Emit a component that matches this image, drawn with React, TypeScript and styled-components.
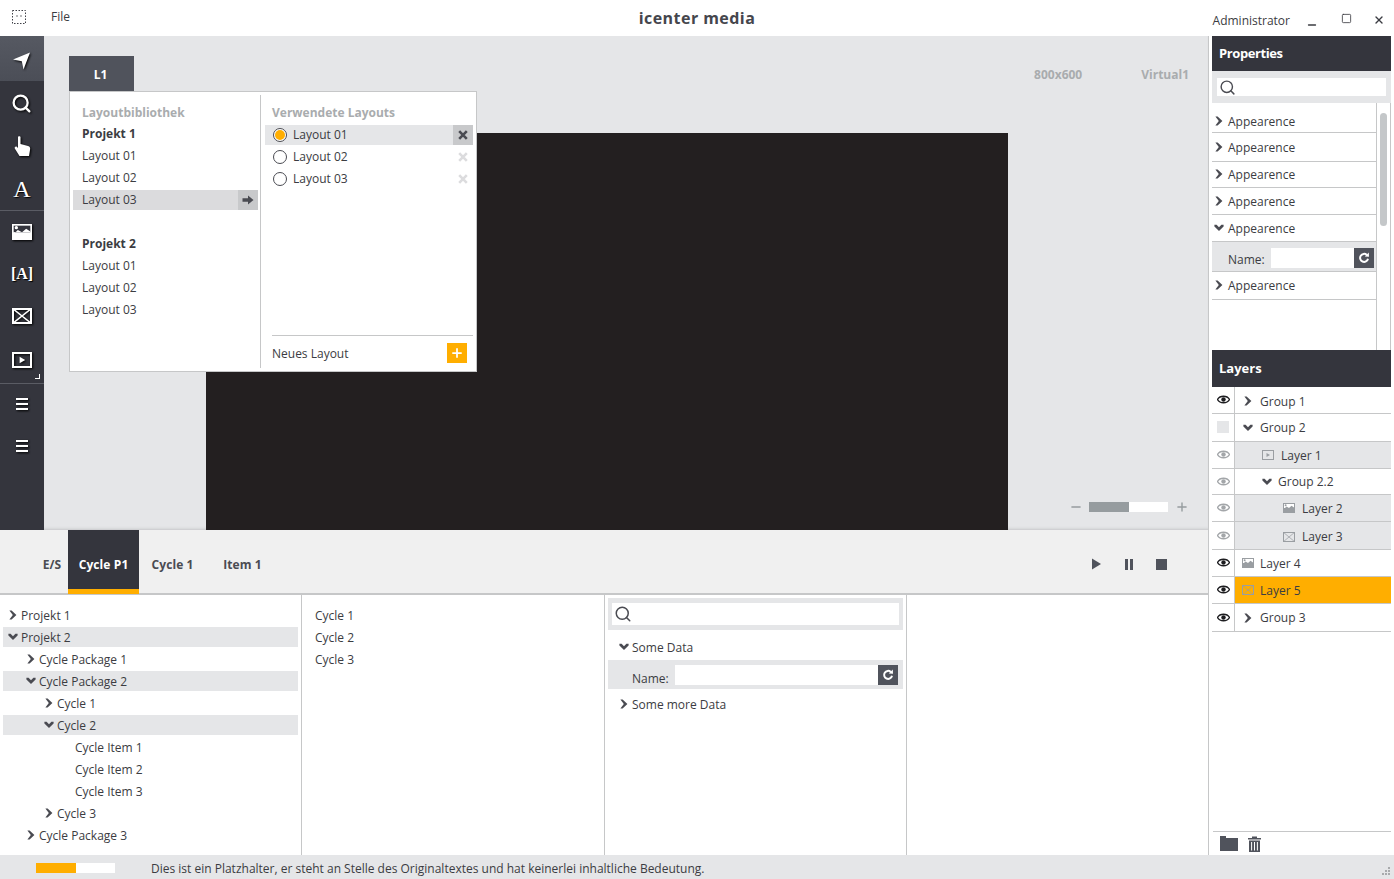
import React from 'react';
import styled, { createGlobalStyle } from 'styled-components';
import { Minus, Square, X, Plus, Search } from 'lucide-react';

const DARK = '#34353d';
const SLATE = '#50535c';
const PALE = '#e5e6e8';
const LINE = '#c6c7c8';
const ORANGE = '#ffae00';
const TEXT = '#3b3c42';

const GlobalStyle = createGlobalStyle`
  html, body { margin: 0; padding: 0; background: #fff; }
  body { font-family: "Open Sans", "Noto Sans", sans-serif; font-size: 12px; color: ${TEXT}; }
  * { box-sizing: border-box; }
`;

const Shell = styled.div`
  width: 1394px;
  height: 879px;
  display: grid;
  grid-template-rows: 36px 1fr 24px;
  overflow: hidden;
`;

/* title bar */
const TitleBar = styled.header`
  display: grid;
  grid-template-columns: 1fr auto 1fr;
  align-items: center;
  background: #fff;
`;
const TitleLeft = styled.div`
  display: flex;
  align-items: center;
  padding: 0 0 3px 12px;
  gap: 25px;
`;
const AppTitle = styled.div`
  font-size: 16px;
  font-weight: 700;
  letter-spacing: 0.45px;
  color: #45464d;
`;
const TitleRight = styled.div`
  display: flex;
  align-items: center;
  justify-content: flex-end;
  padding: 4px 5px 0 0;
  color: #3b3c42;
`;
const UserName = styled.span`
  margin-right: 12px;
`;
const WinButton = styled.span<{ $gap: number; $y: number }>`
  width: 20px;
  margin-left: ${(p) => p.$gap}px;
  display: flex;
  justify-content: center;
  transform: translateY(${(p) => p.$y}px);
`;

/* body */
const Body = styled.div`
  display: grid;
  grid-template-columns: 1209px 1fr;
  min-height: 0;
`;
const Work = styled.div`
  display: grid;
  grid-template-rows: 494px 1fr;
  min-height: 0;
  border-right: 1px solid ${LINE};
`;
const Top = styled.div`
  display: grid;
  grid-template-columns: 44px 1fr;
  min-height: 0;
`;

/* tools */
const Tools = styled.nav`
  background: ${DARK};
  display: flex;
  flex-direction: column;
  position: relative;
`;
const Tool = styled.div<{ $active?: boolean; $h: number; $line?: boolean; $size?: number; $weight?: number; $pt?: number; $pr?: number }>`
  height: ${(p) => p.$h}px;
  flex: none;
  display: flex;
  align-items: center;
  justify-content: center;
  padding: ${(p) => p.$pt ?? 0}px ${(p) => p.$pr ?? 0}px 0 0;
  color: #fff;
  background: ${(p) => (p.$active ? 'linear-gradient(#565962, #4b4e57)' : 'transparent')};
  border-bottom: ${(p) => (p.$line ? '1px solid #5a5c64' : '0')};
  font-family: "Liberation Serif", serif;
  font-weight: ${(p) => p.$weight ?? 700};
  font-size: ${(p) => p.$size ?? 20}px;
  text-shadow: 1px 1px 1px #000;
  & svg { filter: drop-shadow(1px 1px 1px #000); }
`;
const ToolCorner = styled.span`
  position: absolute;
  left: 35px;
  top: 338px;
  width: 5px;
  height: 5px;
  border-right: 1px solid #fff;
  border-bottom: 1px solid #fff;
`;

/* canvas */
const Canvas = styled.main`
  position: relative;
  background: ${PALE};
  display: flex;
  flex-direction: column;
  box-shadow: inset 0 -3px 3px -2px #c4c5c7;
`;
const CanvasHead = styled.div`
  height: 97px;
  flex: none;
  display: flex;
  justify-content: flex-end;
  gap: 59px;
  padding: 30px 19px 0 0;
  font-weight: 700;
  color: #a9acae;
`;
const Stage = styled.div`
  flex: 1;
  display: flex;
  padding-left: 162px;
  min-height: 0;
`;
const Screen = styled.div`
  width: 802px;
  background: #231f20;
`;
const Zoom = styled.div`
  flex: 1;
  display: flex;
  align-items: center;
  align-self: flex-end;
  padding: 0 0 16px 61px;
  color: #969c9f;
`;
const ZoomTrack = styled.div`
  width: 79px;
  height: 10px;
  margin: 0 7px 0 6px;
  background: #fff;
`;
const ZoomFill = styled.div`
  height: 100%;
  background: #969c9f;
`;

/* layout picker */
const LayoutTab = styled.div`
  position: absolute;
  left: 25px;
  top: 20px;
  width: 65px;
  height: 35px;
  background: ${SLATE};
  color: #fff;
  font-weight: 700;
  display: flex;
  align-items: center;
  justify-content: center;
  padding: 2px 2px 0 0;
`;
const Popup = styled.div`
  position: absolute;
  left: 25px;
  top: 55px;
  width: 408px;
  height: 281px;
  background: #fff;
  border: 1px solid ${LINE};
  display: grid;
  grid-template-columns: 191px 1fr;
  padding: 3px 0;
`;
const PopLeft = styled.div`
  border-right: 1px solid ${LINE};
  padding: 7px 2px 0 3px;
`;
const PopRight = styled.div`
  padding: 7px 3px 0 4px;
  display: flex;
  flex-direction: column;
`;
const PopHead = styled.div<{ $left: number; $mb: number }>`
  height: 21px;
  line-height: 21px;
  margin-bottom: ${(p) => p.$mb}px;
  padding-left: ${(p) => p.$left}px;
  font-weight: 700;
  color: #a9acae;
`;
const PopGroup = styled.div<{ $mb: number }>`
  height: 22px;
  margin-bottom: ${(p) => p.$mb}px;
  line-height: 22px;
  padding-left: 9px;
  font-weight: 700;
  color: ${TEXT};
`;
const PopRow = styled.div<{ $on?: boolean }>`
  height: 20px;
  margin-bottom: 2px;
  padding: 0 0 2px 9px;
  display: flex;
  align-items: center;
  justify-content: space-between;
  background: ${(p) => (p.$on ? '#dbdbdd' : 'transparent')};
`;
const PopGap = styled.div`
  height: 21px;
`;
const PopButton = styled.span<{ $on?: boolean; $mb?: number }>`
  width: 20px;
  height: 20px;
  margin-bottom: ${(p) => p.$mb ?? 0}px;
  display: flex;
  align-items: center;
  justify-content: center;
  background: ${(p) => (p.$on ? '#c8c9cb' : 'transparent')};
`;
const UsedRow = styled.div<{ $on?: boolean }>`
  height: 20px;
  margin-bottom: 2px;
  display: flex;
  align-items: center;
  padding-left: 8px;
  gap: 6px;
  background: ${(p) => (p.$on ? PALE : 'transparent')};
`;
const Radio = styled.span<{ $on?: boolean }>`
  width: 14px;
  height: 14px;
  flex: none;
  border-radius: 50%;
  border: 1px solid #4a4b52;
  background: #fff;
  display: flex;
  align-items: center;
  justify-content: center;
  &::after {
    content: '';
    width: 10px;
    height: 10px;
    border-radius: 50%;
    background: ${(p) => (p.$on ? ORANGE : 'transparent')};
  }
`;
const UsedName = styled.span`
  flex: 1;
  padding-bottom: 1px;
`;
const PopFoot = styled.div`
  margin: auto 0 0 7px;
  height: 33px;
  border-top: 1px solid ${LINE};
  display: flex;
  align-items: center;
  justify-content: space-between;
  padding: 2px 6px 0 0;
`;
const AddButton = styled.span`
  width: 20px;
  height: 20px;
  background: ${ORANGE};
  color: #fff;
  display: flex;
  align-items: center;
  justify-content: center;
`;

/* cycle area */
const Bottom = styled.section`
  display: grid;
  grid-template-rows: 65px 1fr;
  min-height: 0;
`;
const TabBar = styled.div`
  background: #f0f0f0;
  border-bottom: 2px solid ${LINE};
  display: flex;
  padding-left: 36px;
`;
const Tab = styled.div<{ $active?: boolean; $w: number }>`
  width: ${(p) => p.$w}px;
  height: 64px;
  display: flex;
  align-items: center;
  justify-content: center;
  padding-top: 9px;
  font-weight: 700;
  letter-spacing: 0.1px;
  color: ${(p) => (p.$active ? '#fff' : '#4a4b52')};
  background: ${(p) => (p.$active ? DARK : 'transparent')};
  border-bottom: ${(p) => (p.$active ? `5px solid ${ORANGE}` : '0')};
  padding-bottom: ${(p) => (p.$active ? '0' : '5px')};
`;
const Player = styled.div`
  margin-left: auto;
  display: flex;
  align-items: center;
  gap: 21px;
  padding: 5px 41px 0 0;
  color: ${SLATE};
`;
const Columns = styled.div`
  display: grid;
  grid-template-columns: 302px 303px 302px 1fr;
  min-height: 0;
`;
const Column = styled.div<{ $pt?: number }>`
  border-right: 1px solid ${LINE};
  padding: ${(p) => p.$pt ?? 10}px 3px 0 3px;
  min-width: 0;
  &:last-child { border-right: 0; }
`;
const TreeRow = styled.div<{ $indent: number; $on?: boolean }>`
  height: 20px;
  margin-bottom: 2px;
  display: flex;
  align-items: center;
  gap: 3px;
  padding-left: ${(p) => p.$indent}px;
  background: ${(p) => (p.$on ? PALE : 'transparent')};
  white-space: nowrap;
`;
const LeafGap = styled.span`
  width: 8px;
`;
const PlainRow = styled.div`
  height: 20px;
  margin-bottom: 2px;
  padding-left: 10px;
  display: flex;
  align-items: center;
`;
const SearchBand = styled.div<{ $x: number; $y: number }>`
  background: ${PALE};
  padding: ${(p) => p.$y}px ${(p) => p.$x}px;
  height: 32px;
  flex: none;
`;
const SearchBox = styled.div`
  height: 100%;
  background: #fff;
  padding-left: 2px;
  display: flex;
  align-items: center;
  color: #4a4b52;
`;
const DataHead = styled.div<{ $h: number; $pt?: number }>`
  height: ${(p) => p.$h}px;
  display: flex;
  align-items: center;
  gap: 3px;
  padding: ${(p) => p.$pt ?? 0}px 0 0 11px;
`;
const NameBand = styled.div<{ $left: number; $right: number; $pt: number }>`
  background: ${PALE};
  height: 100%;
  display: flex;
  align-items: center;
  padding: ${(p) => p.$pt}px ${(p) => p.$right}px 0 ${(p) => p.$left}px;
`;
const NameSlot = styled.div`
  height: 29px;
`;
const NameLabel = styled.span<{ $w: number; $pt: number }>`
  width: ${(p) => p.$w}px;
  flex: none;
  padding-top: ${(p) => p.$pt}px;
`;
const NameInput = styled.div`
  flex: 1;
  height: 20px;
  background: #fff;
`;
const RefreshButton = styled.span`
  width: 20px;
  height: 20px;
  background: ${SLATE};
  display: flex;
  align-items: center;
  justify-content: center;
  color: #fff;
`;

/* right panel */
const Side = styled.aside`
  display: flex;
  flex-direction: column;
  padding: 0 3px 0 3px;
  min-height: 0;
`;
const PanelHead = styled.div<{ $h: number; $spacing?: number }>`
  height: ${(p) => p.$h}px;
  flex: none;
  background: ${DARK};
  color: #fff;
  font-weight: 700;
  font-size: 13px;
  letter-spacing: ${(p) => p.$spacing ?? 0}px;
  display: flex;
  align-items: center;
  padding: 0 0 2px 7px;
`;
const PropArea = styled.div`
  height: 247px;
  flex: none;
  display: grid;
  grid-template-columns: 165px 14px;
`;
const PropList = styled.div`
  border-right: 1px solid ${LINE};
`;
const PropRow = styled.div<{ $h: number; $bottom: number }>`
  height: ${(p) => p.$h}px;
  border-bottom: 1px solid ${LINE};
  display: flex;
  align-items: flex-end;
  padding: 0 0 ${(p) => p.$bottom}px 2px;
`;
const PropLabel = styled.div`
  display: flex;
  align-items: center;
  gap: 4px;
  height: 18px;
`;
const NameRow = styled.div`
  height: 30px;
  border-bottom: 1px solid ${LINE};
`;
const ScrollTrack = styled.div`
  padding: 10px 3px 0 3px;
  border-right: 1px solid ${LINE};
`;
const ScrollThumb = styled.div`
  height: 113px;
  border-radius: 4px;
  background: #c4c7c9;
`;
const LayerList = styled.div`
  flex: 1;
  min-height: 0;
`;
const LayerRow = styled.div<{ $h: number; $shade?: boolean }>`
  height: ${(p) => p.$h}px;
  display: grid;
  grid-template-columns: 23px 1fr;
  border-bottom: 1px solid ${LINE};
  background: ${(p) => (p.$shade ? PALE : '#fff')};
`;
const EyeCell = styled.div<{ $off?: boolean }>`
  background: #fff;
  border-right: 1px solid ${LINE};
  display: flex;
  align-items: center;
  justify-content: center;
  padding-bottom: 1px;
  color: ${(p) => (p.$off ? '#a3a6a9' : '#1d1d20')};
`;
const EmptyVisible = styled.span`
  width: 12px;
  height: 12px;
  background: ${PALE};
`;
const LayerBody = styled.div<{ $indent: number; $sel?: boolean; $gap: number; $pt: number }>`
  display: flex;
  align-items: center;
  gap: ${(p) => p.$gap}px;
  padding: ${(p) => p.$pt}px 0 0 ${(p) => p.$indent}px;
  background: ${(p) => (p.$sel ? ORANGE : 'transparent')};
`;
const SideFoot = styled.div`
  height: 24px;
  flex: none;
  margin-left: 1px;
  border-top: 1px solid ${LINE};
  display: flex;
  align-items: center;
  gap: 10px;
  padding-left: 7px;
  color: ${SLATE};
`;

/* status */
const StatusBar = styled.footer`
  background: ${PALE};
  display: flex;
  align-items: center;
  padding: 2px 0 0 36px;
  position: relative;
`;
const Progress = styled.div`
  width: 79px;
  height: 10px;
  background: #fff;
  margin-right: 36px;
`;
const ProgressFill = styled.div`
  height: 100%;
  background: ${ORANGE};
`;
const Grip = styled.svg`
  position: absolute;
  right: 3px;
  bottom: 3px;
`;
const Glyph = styled.svg`
  flex: none;
`;

const ChevronRight = () => (
  <Glyph width="10" height="10" viewBox="0 0 10 10">
    <path d="M1.4 0.6 H3.6 L8.4 5 L3.6 9.4 H1.4 L4.8 5Z" fill="#4a4b52" />
  </Glyph>
);
const ChevronDown = () => (
  <Glyph width="10" height="10" viewBox="0 0 10 10">
    <path d="M0.4 1.8 H2.6 L5 4.2 L7.4 1.8 H9.6 V3.6 L5 8 L0.4 3.6Z" fill="#4a4b52" />
  </Glyph>
);

const Eye = () => (
  <svg width="13" height="9" viewBox="0 0 13 9">
    <path d="M0.5 4.5 C3 0.2 10 0.2 12.5 4.5 C10 8.8 3 8.8 0.5 4.5Z" fill="none" stroke="currentColor" strokeWidth="1.4" />
    <circle cx="6.5" cy="4.5" r="2.2" fill="currentColor" />
  </svg>
);
const Refresh = () => (
  <svg width="12" height="12" viewBox="0 0 12 12">
    <path d="M8.8 2.9 A4 4 0 1 0 10 6.8" fill="none" stroke="#fff" strokeWidth="2" />
    <path d="M6.8 4.6 L11 4.8 L10.8 0.4Z" fill="#fff" />
  </svg>
);
const Cross = ({ color }: { color: string }) => (
  <svg width="10" height="10" viewBox="0 0 10 10">
    <path d="M1.2 1.2 L8.8 8.8 M8.8 1.2 L1.2 8.8" stroke={color} strokeWidth="2.6" />
  </svg>
);
const ArrowRight = () => (
  <svg width="12" height="10" viewBox="0 0 12 10">
    <path d="M0.5 3.2 H6 V0.5 L11.5 5 L6 9.5 V6.8 H0.5Z" fill="#4a4b52" />
  </svg>
);
const ImageGlyph = ({ size = 12, color = '#9a9ea2', hole = '#fff' }: { size?: number; color?: string; hole?: string }) => (
  <Glyph width={size} height={(size * 10) / 12} viewBox="0 0 12 10">
    <rect x="0" y="0" width="12" height="10" fill={color} />
    <rect x="1" y="1" width="10" height="4" fill={hole} />
    <path d="M1 6 L3.5 3.6 L6 5 L8.5 2.8 L11 4.5 V5 H1Z" fill={color} />
    <circle cx="2.6" cy="2.2" r="1" fill={color} />
  </Glyph>
);
const CrossBox = ({ color = '#9a9ea2', w = 12, h = 10, sw = 1 }: { color?: string; w?: number; h?: number; sw?: number }) => (
  <Glyph width={w} height={h} viewBox={`0 0 ${w} ${h}`}>
    <rect x={sw / 2} y={sw / 2} width={w - sw} height={h - sw} fill="none" stroke={color} strokeWidth={sw} />
    <path d={`M0 0 L${w} ${h} M${w} 0 L0 ${h}`} stroke={color} strokeWidth={sw * 0.7} />
  </Glyph>
);
const PlayBox = ({ color = '#9a9ea2', w = 12, h = 10, sw = 1 }: { color?: string; w?: number; h?: number; sw?: number }) => (
  <Glyph width={w} height={h} viewBox={`0 0 ${w} ${h}`}>
    <rect x={sw / 2} y={sw / 2} width={w - sw} height={h - sw} fill="none" stroke={color} strokeWidth={sw} />
    <path d={`M${w / 2 - h * 0.15} ${h * 0.3} L${w / 2 + h * 0.2} ${h / 2} L${w / 2 - h * 0.15} ${h * 0.7}Z`} fill={color} />
  </Glyph>
);
const Lines = () => (
  <svg width="12" height="12" viewBox="0 0 12 12">
    <path d="M0 1 H12 M0 6 H12 M0 11 H12" stroke="#fff" strokeWidth="2" />
  </svg>
);

const tree = [
  { label: 'Projekt 1', indent: 5, open: false },
  { label: 'Projekt 2', indent: 5, open: true, on: true },
  { label: 'Cycle Package 1', indent: 23, open: false },
  { label: 'Cycle Package 2', indent: 23, open: true, on: true },
  { label: 'Cycle 1', indent: 41, open: false },
  { label: 'Cycle 2', indent: 41, open: true, on: true },
  { label: 'Cycle Item 1', indent: 61, leaf: true },
  { label: 'Cycle Item 2', indent: 61, leaf: true },
  { label: 'Cycle Item 3', indent: 61, leaf: true },
  { label: 'Cycle 3', indent: 41, open: false },
  { label: 'Cycle Package 3', indent: 23, open: false },
];

const props = [
  { h: 30, bottom: 2, open: false },
  { h: 29, bottom: 5, open: false },
  { h: 26, bottom: 4, open: false },
  { h: 27, bottom: 4, open: false },
  { h: 27, bottom: 4, open: true },
];

const layers = [
  { label: 'Group 1', h: 27, indent: 8, kind: 'closed', eye: 'on', pt: 2, gap: 7 },
  { label: 'Group 2', h: 28, indent: 8, kind: 'open', eye: 'none', pt: 0, gap: 7 },
  { label: 'Layer 1', h: 27, indent: 27, kind: 'play', eye: 'off', shade: true, pt: 0, gap: 7 },
  { label: 'Group 2.2', h: 26, indent: 27, kind: 'open', eye: 'off', pt: 0, gap: 6 },
  { label: 'Layer 2', h: 27, indent: 48, kind: 'image', eye: 'off', shade: true, pt: 0, gap: 7 },
  { label: 'Layer 3', h: 28, indent: 48, kind: 'cross', eye: 'off', shade: true, pt: 2, gap: 7 },
  { label: 'Layer 4', h: 27, indent: 7, kind: 'image', eye: 'on', pt: 0, gap: 6 },
  { label: 'Layer 5', h: 27, indent: 7, kind: 'cross', eye: 'on', sel: true, pt: 0, gap: 6 },
  { label: 'Group 3', h: 28, indent: 8, kind: 'closed', eye: 'on', pt: 0, gap: 7 },
];

const layerIcon = (kind: string) => {
  if (kind === 'closed') return <ChevronRight />;
  if (kind === 'open') return <ChevronDown />;
  if (kind === 'play') return <PlayBox />;
  if (kind === 'image') return <ImageGlyph />;
  return <CrossBox />;
};

const App: React.FC = () => {
  return (
    <Shell>
      <GlobalStyle />
      <TitleBar>
        <TitleLeft>
          <svg width="14" height="14" viewBox="0 0 14 14">
            <rect x="0.5" y="0.5" width="13" height="13" fill="none" stroke="#3f4047" strokeDasharray="1.5 1.5" />
            <circle cx="5" cy="6" r="0.7" fill="#3f4047" />
            <circle cx="9" cy="6" r="0.7" fill="#3f4047" />
          </svg>
          <span>File</span>
        </TitleLeft>
        <AppTitle>icenter media</AppTitle>
        <TitleRight>
          <UserName>Administrator</UserName>
          <WinButton $gap={0} $y={5}><Minus size={12} strokeWidth={2.6} /></WinButton>
          <WinButton $gap={14} $y={-2}><Square size={11} strokeWidth={1.8} /></WinButton>
          <WinButton $gap={13} $y={0}><X size={12} strokeWidth={2.8} /></WinButton>
        </TitleRight>
      </TitleBar>

      <Body>
        <Work>
          <Top>
            <Tools>
              <Tool $active $h={45} $pt={5}>
                <svg width="20" height="20" viewBox="0 0 20 20">
                  <path d="M1 8.5 L18 1.5 L11.5 18.5 L9.8 10.2Z" fill="#fff" />
                </svg>
              </Tool>
              <Tool $h={44} $pr={2}>
                <Search size={21} strokeWidth={2.6} />
              </Tool>
              <Tool $h={42}>
                <svg width="17" height="21" viewBox="0 0 17 21">
                  <path d="M4 1 C4 0 6.5 0 6.5 1 V8 L14 10 C16 10.5 16.5 12 16 14 L15 20 H5.5 L0.8 12.5 C0.2 11 2 10 3 11 L4 12Z" fill="#fff" />
                </svg>
              </Tool>
              <Tool $h={44} $line $size={24} $weight={400} $pt={2}>A</Tool>
              <Tool $h={42}>
                <ImageGlyph size={20} color="#fff" hole="#34353d" />
              </Tool>
              <Tool $h={41} $size={16}>[A]</Tool>
              <Tool $h={44}>
                <CrossBox color="#fff" w={20} h={16} sw={2} />
              </Tool>
              <Tool $h={44}>
                <PlayBox color="#fff" w={20} h={16} sw={2} />
              </Tool>
              <Tool $h={2} $line />
              <Tool $h={40}><Lines /></Tool>
              <Tool $h={44}><Lines /></Tool>
              <ToolCorner />
            </Tools>

            <Canvas>
              <CanvasHead>
                <span>800x600</span>
                <span>Virtual1</span>
              </CanvasHead>
              <Stage>
                <Screen />
                <Zoom>
                  <Minus size={14} strokeWidth={2.4} />
                  <ZoomTrack><ZoomFill style={{ width: '50%' }} /></ZoomTrack>
                  <Plus size={14} strokeWidth={2.4} />
                </Zoom>
              </Stage>

              <LayoutTab>L1</LayoutTab>
              <Popup>
                <PopLeft>
                  <PopHead $left={9} $mb={0}>Layoutbibliothek</PopHead>
                  <PopGroup $mb={1}>Projekt 1</PopGroup>
                  <PopRow>Layout 01</PopRow>
                  <PopRow>Layout 02</PopRow>
                  <PopRow $on>
                    Layout 03
                    <PopButton $on $mb={-2}><ArrowRight /></PopButton>
                  </PopRow>
                  <PopGap />
                  <PopGroup $mb={1}>Projekt 2</PopGroup>
                  <PopRow>Layout 01</PopRow>
                  <PopRow>Layout 02</PopRow>
                  <PopRow>Layout 03</PopRow>
                </PopLeft>
                <PopRight>
                  <PopHead $left={7} $mb={2}>Verwendete Layouts</PopHead>
                  <UsedRow $on>
                    <Radio $on />
                    <UsedName>Layout 01</UsedName>
                    <PopButton $on><Cross color="#4a4b52" /></PopButton>
                  </UsedRow>
                  <UsedRow>
                    <Radio />
                    <UsedName>Layout 02</UsedName>
                    <PopButton><Cross color="#dcdcde" /></PopButton>
                  </UsedRow>
                  <UsedRow>
                    <Radio />
                    <UsedName>Layout 03</UsedName>
                    <PopButton><Cross color="#dcdcde" /></PopButton>
                  </UsedRow>
                  <PopFoot>
                    Neues Layout
                    <AddButton><Plus size={14} strokeWidth={3} /></AddButton>
                  </PopFoot>
                </PopRight>
              </Popup>
            </Canvas>
          </Top>

          <Bottom>
            <TabBar>
              <Tab $w={32}>E/S</Tab>
              <Tab $active $w={71}>Cycle P1</Tab>
              <Tab $w={67}>Cycle 1</Tab>
              <Tab $w={73}>Item 1</Tab>
              <Player>
                <svg width="11" height="12" viewBox="0 0 11 12"><path d="M1 0.5 L10 6 L1 11.5Z" fill="currentColor" /></svg>
                <svg width="12" height="11" viewBox="0 0 12 11"><path d="M2 0h3v11H2z M7 0h3v11H7z" fill="currentColor" /></svg>
                <svg width="11" height="11" viewBox="0 0 11 11"><rect width="11" height="11" fill="currentColor" /></svg>
              </Player>
            </TabBar>
            <Columns>
              <Column>
                {tree.map((row) => (
                  <TreeRow key={row.label} $indent={row.indent} $on={row.on}>
                    {row.leaf ? <LeafGap /> : row.open ? <ChevronDown /> : <ChevronRight />}
                    {row.label}
                  </TreeRow>
                ))}
              </Column>
              <Column>
                <PlainRow>Cycle 1</PlainRow>
                <PlainRow>Cycle 2</PlainRow>
                <PlainRow>Cycle 3</PlainRow>
              </Column>
              <Column $pt={3}>
                <SearchBand $x={4} $y={5}>
                  <SearchBox><Search size={18} strokeWidth={2} /></SearchBox>
                </SearchBand>
                <DataHead $h={30} $pt={4}><ChevronDown />Some Data</DataHead>
                <NameSlot>
                  <NameBand $left={24} $right={5} $pt={0}>
                    <NameLabel $w={43} $pt={7}>Name:</NameLabel>
                    <NameInput />
                    <RefreshButton><Refresh /></RefreshButton>
                  </NameBand>
                </NameSlot>
                <DataHead $h={30}><ChevronRight />Some more Data</DataHead>
              </Column>
              <Column />
            </Columns>
          </Bottom>
        </Work>

        <Side>
          <PanelHead $h={35} $spacing={-0.4}>Properties</PanelHead>
          <SearchBand $x={5} $y={7}>
            <SearchBox><Search size={17} strokeWidth={2} /></SearchBox>
          </SearchBand>
          <PropArea>
            <PropList>
              {props.map((row, i) => (
                <PropRow key={i} $h={row.h} $bottom={row.bottom}>
                  <PropLabel>{row.open ? <ChevronDown /> : <ChevronRight />}Appearence</PropLabel>
                </PropRow>
              ))}
              <NameRow>
                <NameBand $left={16} $right={2} $pt={2}>
                  <NameLabel $w={43} $pt={3}>Name:</NameLabel>
                  <NameInput />
                  <RefreshButton><Refresh /></RefreshButton>
                </NameBand>
              </NameRow>
              <PropRow $h={28} $bottom={5}>
                <PropLabel><ChevronRight />Appearence</PropLabel>
              </PropRow>
            </PropList>
            <ScrollTrack><ScrollThumb /></ScrollTrack>
          </PropArea>
          <PanelHead $h={37}>Layers</PanelHead>
          <LayerList>
            {layers.map((l) => (
              <LayerRow key={l.label} $h={l.h} $shade={l.shade}>
                <EyeCell $off={l.eye === 'off'}>
                  {l.eye === 'none' ? <EmptyVisible /> : <Eye />}
                </EyeCell>
                <LayerBody $indent={l.indent} $sel={l.sel} $gap={l.gap} $pt={l.pt}>
                  {layerIcon(l.kind)}
                  <span>{l.label}</span>
                </LayerBody>
              </LayerRow>
            ))}
          </LayerList>
          <SideFoot>
            <svg width="18" height="15" viewBox="0 0 18 15">
              <path d="M0 0 H6 V2 H18 V15 H0Z" fill="currentColor" />
            </svg>
            <svg width="13" height="16" viewBox="0 0 13 16">
              <path d="M0 2 H4 V0.5 H9 V2 H13 V3.5 H0Z M1 4.5 H12 V16 H1Z" fill="currentColor" />
              <path d="M3.6 6 V14.5 M6.5 6 V14.5 M9.4 6 V14.5" stroke="#fff" strokeWidth="1" />
            </svg>
          </SideFoot>
        </Side>
      </Body>

      <StatusBar>
        <Progress><ProgressFill style={{ width: '50%' }} /></Progress>
        Dies ist ein Platzhalter, er steht an Stelle des Originaltextes und hat keinerlei inhaltliche Bedeutung.
        <Grip width="9" height="9" viewBox="0 0 9 9">
          <path d="M6 0h2v2H6z M3 3h2v2H3z M6 3h2v2H6z M0 6h2v2H0z M3 6h2v2H3z M6 6h2v2H6z" fill="#a8aaac" />
        </Grip>
      </StatusBar>
    </Shell>
  );
};

export default App;
